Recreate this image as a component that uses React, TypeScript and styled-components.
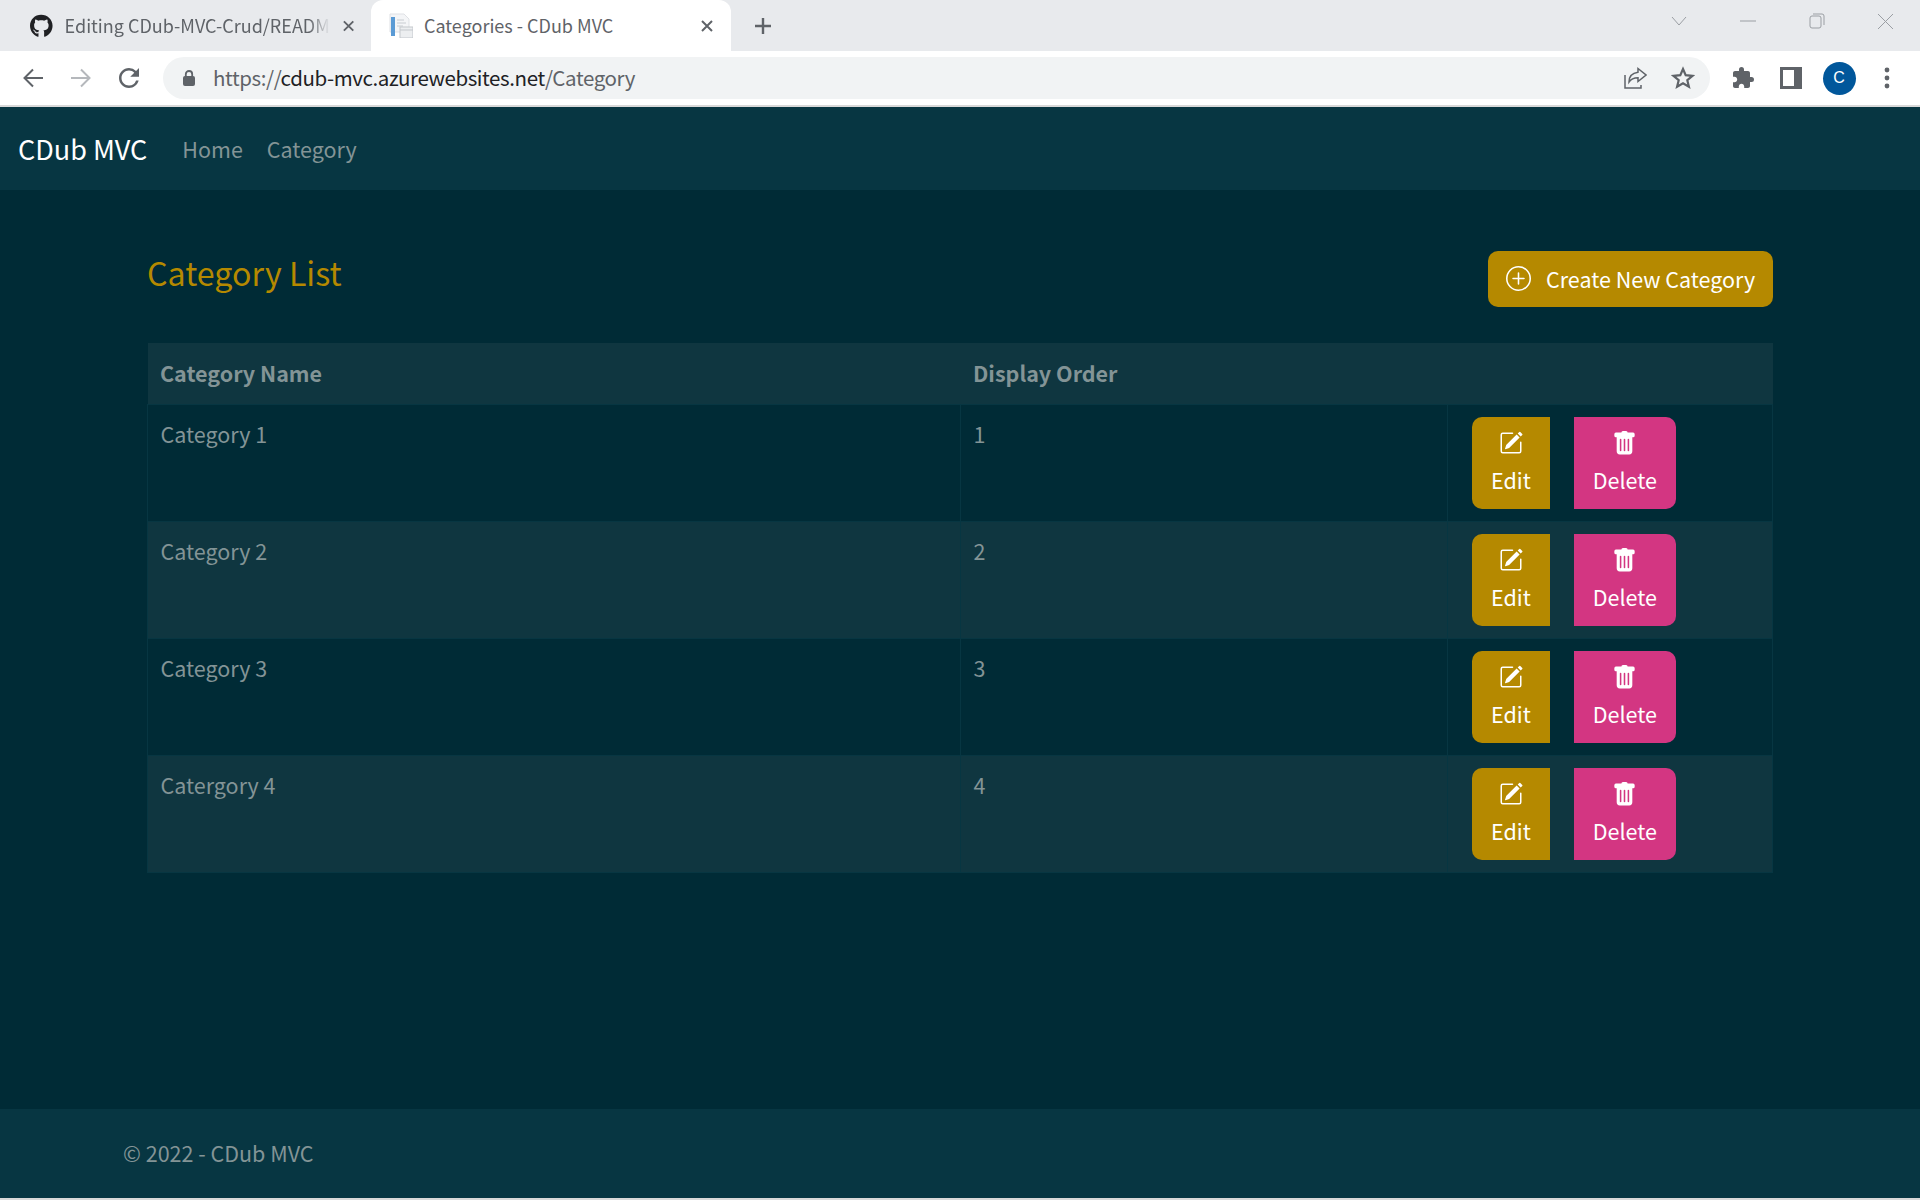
import React from "react";
import styled, { createGlobalStyle } from "styled-components";
import { FaGithub } from "react-icons/fa";
import { BsPencilSquare, BsPlusCircle, BsTrashFill } from "react-icons/bs";
import { MdExtension, MdRefresh } from "react-icons/md";

const FONT = `"Noto Sans CJK SC", "Source Sans Pro", "Noto Sans", sans-serif`;

const GlobalStyle = createGlobalStyle`
  html, body {
    margin: 0;
    padding: 0;
    background: #d9d9d9;
  }
  * {
    box-sizing: border-box;
  }
`;

const Screen = styled.div`
  width: 1920px;
  height: 1200px;
  display: flex;
  flex-direction: column;
  overflow: hidden;
  background: #d9d9d9;
  font-family: ${FONT};
`;

const TabStrip = styled.div`
  height: 51px;
  flex-shrink: 0;
  background: #e8eaed;
  display: flex;
  align-items: flex-end;
  padding-left: 8px;
`;

const Tab = styled.div<{ $active?: boolean }>`
  width: ${(p) => (p.$active ? "360px" : "356px")};
  height: ${(p) => (p.$active ? "51px" : "44px")};
  display: flex;
  align-items: center;
  padding: ${(p) => (p.$active ? "0 17px 0 18px" : "0 9px 7px 22px")};
  background: ${(p) => (p.$active ? "#fff" : "transparent")};
  border-radius: 12px 12px 0 0;
  margin-left: ${(p) => (p.$active ? "7px" : "0")};
  gap: ${(p) => (p.$active ? "11px" : "12px")};
  font-size: 18px;
  color: #5f6368;
  white-space: nowrap;
`;

const TabTitle = styled.span<{ $fade?: boolean }>`
  flex: 1;
  padding-bottom: 2px;
  -webkit-mask-image: ${(p) =>
    p.$fade ? "linear-gradient(90deg, #000 92%, transparent 100%)" : "none"};
`;

const NewTab = styled.div`
  width: 30px;
  height: 44px;
  margin-left: 17px;
  padding-bottom: 7px;
  display: flex;
  align-items: center;
  justify-content: center;
  color: #5f6368;
`;

const WindowControls = styled.div`
  margin-left: auto;
  height: 51px;
  display: flex;
  align-items: center;
  padding-bottom: 9px;
  color: #9a9ea3;
`;

const WindowButton = styled.div`
  width: 69px;
  display: flex;
  justify-content: center;
`;

const Toolbar = styled.div`
  height: 56px;
  flex-shrink: 0;
  background: #fff;
  border-bottom: 2px solid #d9d9d9;
  display: flex;
  align-items: center;
  padding-left: 9px;
  color: #5f6368;
`;

const ToolSlot = styled.div`
  width: 48px;
  display: flex;
  align-items: center;
  justify-content: center;
`;

const Omnibox = styled.div`
  width: 1547px;
  height: 42px;
  margin-left: 10px;
  background: #f1f3f4;
  border-radius: 21px;
  display: flex;
  align-items: center;
  padding: 0 15px 0 20px;
  font-size: 20.5px;
  letter-spacing: -0.4px;
  color: #5f6368;
`;

const UrlText = styled.span`
  margin-left: 18px;
  padding-bottom: 2px;
  flex: 1;
`;

const UrlHost = styled.span`
  color: #202124;
`;

const OmniActions = styled.div`
  display: flex;
  align-items: center;
  gap: 24px;
`;

const ToolActions = styled.div`
  display: flex;
  align-items: center;
  margin-left: 9px;
`;

const Avatar = styled.div`
  width: 33px;
  height: 33px;
  border-radius: 50%;
  background: #01579b;
  color: #fff;
  font-family: "Liberation Sans", sans-serif;
  font-size: 16px;
  display: flex;
  align-items: center;
  justify-content: center;
`;

const Page = styled.div`
  flex: 1;
  margin-bottom: 2px;
  background: #002b36;
  display: flex;
  flex-direction: column;
`;

const Navbar = styled.nav`
  height: 83px;
  flex-shrink: 0;
  background: #073642;
  display: flex;
  align-items: center;
  padding-left: 18px;
`;

const Brand = styled.a`
  font-size: 27px;
  color: #fff;
  margin-right: 35px;
`;

const NavLink = styled.a`
  font-size: 21.5px;
  color: #839496;
  margin-right: 24px;
`;

const Main = styled.main`
  flex: 1;
  padding: 0 147px;
`;

const HeadingRow = styled.div`
  display: flex;
  justify-content: space-between;
  padding-top: 61px;
  height: 153px;
`;

const Title = styled.h2`
  margin: -2px 0 0;
  font-size: 32.2px;
  font-weight: 400;
  color: #b58900;
  line-height: 46px;
`;

const CreateButton = styled.button`
  width: 285px;
  height: 56px;
  border: none;
  border-radius: 10px;
  background: #b58900;
  color: #fff;
  font-family: ${FONT};
  font-size: 21.5px;
  display: flex;
  align-items: center;
  gap: 15px;
  padding: 0 0 2px 18px;
  white-space: nowrap;
`;

const Table = styled.table`
  width: 100%;
  table-layout: fixed;
  border-collapse: collapse;
  color: #839496;
  font-size: 21.5px;
`;

const HeaderRow = styled.tr`
  height: 61px;
  background: #0f3640;
`;

const HeaderCell = styled.th<{ $width?: string }>`
  width: ${(p) => p.$width ?? "auto"};
  text-align: left;
  font-weight: 700;
  padding: 0 12.5px 2px;
`;

const Row = styled.tr<{ $striped: boolean }>`
  height: 117px;
  background: ${(p) => (p.$striped ? "#0f3640" : "#002b36")};
`;

const Cell = styled.td`
  vertical-align: top;
  padding: 12px 12.5px;
  line-height: 33px;
  border: 1px solid #073642;
`;

const ActionCell = styled(Cell)`
  padding: 12px 24px;
`;

const ActionGroup = styled.div`
  display: flex;
  gap: 24px;
`;

const ActionButton = styled.a<{ $kind: "edit" | "delete" }>`
  height: 92px;
  padding: 15px 19px 0;
  background: ${(p) => (p.$kind === "edit" ? "#b58900" : "#d33682")};
  border-radius: ${(p) => (p.$kind === "edit" ? "10px 0 0 10px" : "0 10px 10px 0")};
  color: #fff;
  display: flex;
  flex-direction: column;
  align-items: center;
  gap: 8px;
  line-height: 33px;
`;

const IconFrame = styled.span`
  height: 23px;
  display: flex;
  align-items: center;
  justify-content: center;
`;

const Footer = styled.footer`
  height: 89px;
  flex-shrink: 0;
  background: #073642;
  color: #839496;
  font-size: 21.5px;
  display: flex;
  align-items: center;
  padding: 0 0 2px 123px;
`;

const rows = [
  { name: "Category 1", order: 1 },
  { name: "Category 2", order: 2 },
  { name: "Category 3", order: 3 },
  { name: "Catergory 4", order: 4 },
];

const CloseGlyph = () => (
  <svg width="14" height="14" viewBox="0 0 14 14">
    <path d="M2 2l10 10M12 2L2 12" stroke="#5f6368" strokeWidth="2" />
  </svg>
);

const App: React.FC = () => {
  return (
    <Screen>
      <GlobalStyle />
      <TabStrip>
        <Tab>
          <FaGithub size={24} color="#202124" />
          <TabTitle $fade>Editing CDub-MVC-Crud/READM</TabTitle>
          <CloseGlyph />
        </Tab>
        <Tab $active>
          <svg width="24" height="25" viewBox="0 0 24 25">
            <path d="M1 1h14l5 5v13H1z" fill="#f4f5f7" stroke="#dfe1e5" />
            <rect x="2" y="4" width="4" height="19" fill="#5b9bd5" />
            <path d="M8 7h7M8 10h9M8 13h6" stroke="#c8ccd1" strokeWidth="1" />
            <rect x="11" y="14" width="13" height="11" fill="#eceef0" stroke="#c3c7cc" />
            <path d="M11 17h13" stroke="#c3c7cc" strokeWidth="1" />
          </svg>
          <TabTitle>Categories - CDub MVC</TabTitle>
          <CloseGlyph />
        </Tab>
        <NewTab>
          <svg width="20" height="20" viewBox="0 0 20 20">
            <path d="M10 2v16M2 10h16" stroke="currentColor" strokeWidth="2.4" />
          </svg>
        </NewTab>
        <WindowControls>
          <WindowButton>
            <svg width="16" height="10" viewBox="0 0 16 10">
              <path d="M1 1l7 8 7-8" fill="none" stroke="currentColor" strokeWidth="1" />
            </svg>
          </WindowButton>
          <WindowButton>
            <svg width="16" height="2" viewBox="0 0 16 2">
              <path d="M0 1h16" stroke="currentColor" strokeWidth="1" />
            </svg>
          </WindowButton>
          <WindowButton>
            <svg width="16" height="16" viewBox="0 0 16 16">
              <rect x="1" y="3" width="11" height="12" rx="2" fill="none" stroke="currentColor" />
              <path d="M4 1h9a2 2 0 0 1 2 2v9" fill="none" stroke="currentColor" />
            </svg>
          </WindowButton>
          <WindowButton>
            <svg width="17" height="17" viewBox="0 0 17 17">
              <path d="M1 1l15 15M16 1L1 16" stroke="currentColor" strokeWidth="1" />
            </svg>
          </WindowButton>
        </WindowControls>
      </TabStrip>

      <Toolbar>
        <ToolSlot>
          <svg width="20" height="20" viewBox="0 0 20 20" fill="none" stroke="currentColor" strokeWidth="2">
            <path d="M20 10H2M10 1.5L1.5 10l8.5 8.5" />
          </svg>
        </ToolSlot>
        <ToolSlot>
          <svg width="20" height="20" viewBox="0 0 20 20" fill="none" stroke="#b5b8bc" strokeWidth="2">
            <path d="M0 10h18M10 1.5l8.5 8.5-8.5 8.5" />
          </svg>
        </ToolSlot>
        <ToolSlot>
          <MdRefresh size={30} />
        </ToolSlot>
        <Omnibox>
          <svg width="12" height="16" viewBox="0 0 12 16">
            <rect x="0" y="6" width="12" height="10" rx="2" fill="currentColor" />
            <path d="M2.8 7V4.2a3.2 3.2 0 0 1 6.4 0V7" fill="none" stroke="currentColor" strokeWidth="1.8" />
          </svg>
          <UrlText>
            https://<UrlHost>cdub-mvc.azurewebsites.net</UrlHost>/Category
          </UrlText>
          <OmniActions>
            <svg width="24" height="24" viewBox="0 0 24 24" fill="none" stroke="currentColor" strokeWidth="1.5">
              <path d="M2 9v13h16v-3" />
              <path d="M15 2.5l8 6.5-8 6.5v-3.7c-4 0-7 1.2-9 4.2 0-5 3-9 9-9.8z" />
            </svg>
            <svg width="24" height="24" viewBox="0 0 24 24" fill="none" stroke="currentColor" strokeWidth="2.2">
              <path d="M12 3l2.7 6.2 6.8.6-5.2 4.4 1.6 6.6-5.9-3.6-5.9 3.6 1.6-6.6-5.2-4.4 6.8-.6z" />
            </svg>
          </OmniActions>
        </Omnibox>
        <ToolActions>
          <ToolSlot>
            <MdExtension size={24} />
          </ToolSlot>
          <ToolSlot>
            <svg width="22" height="22" viewBox="0 0 22 22">
              <path d="M0 0h22v22H0zM3 3v16h11V3z" fill="currentColor" fillRule="evenodd" />
            </svg>
          </ToolSlot>
          <ToolSlot>
            <Avatar>C</Avatar>
          </ToolSlot>
          <ToolSlot>
            <svg width="6" height="22" viewBox="0 0 6 22">
              <circle cx="3" cy="3" r="2.4" fill="currentColor" />
              <circle cx="3" cy="11" r="2.4" fill="currentColor" />
              <circle cx="3" cy="19" r="2.4" fill="currentColor" />
            </svg>
          </ToolSlot>
        </ToolActions>
      </Toolbar>

      <Page>
        <Navbar>
          <Brand>CDub MVC</Brand>
          <NavLink>Home</NavLink>
          <NavLink>Category</NavLink>
        </Navbar>
        <Main>
          <HeadingRow>
            <Title>Category List</Title>
            <CreateButton>
              <BsPlusCircle size={25} />
              Create New Category
            </CreateButton>
          </HeadingRow>
          <Table>
            <thead>
              <HeaderRow>
                <HeaderCell $width="813px">Category Name</HeaderCell>
                <HeaderCell $width="487px">Display Order</HeaderCell>
                <HeaderCell />
              </HeaderRow>
            </thead>
            <tbody>
              {rows.map((row, i) => (
                <Row key={row.order} $striped={i % 2 === 1}>
                  <Cell>{row.name}</Cell>
                  <Cell>{row.order}</Cell>
                  <ActionCell>
                    <ActionGroup>
                      <ActionButton $kind="edit">
                        <IconFrame>
                          <BsPencilSquare size={24} />
                        </IconFrame>
                        Edit
                      </ActionButton>
                      <ActionButton $kind="delete">
                        <IconFrame>
                          <BsTrashFill size={25} />
                        </IconFrame>
                        Delete
                      </ActionButton>
                    </ActionGroup>
                  </ActionCell>
                </Row>
              ))}
            </tbody>
          </Table>
        </Main>
        <Footer>© 2022 - CDub MVC</Footer>
      </Page>
    </Screen>
  );
};

export default App;
